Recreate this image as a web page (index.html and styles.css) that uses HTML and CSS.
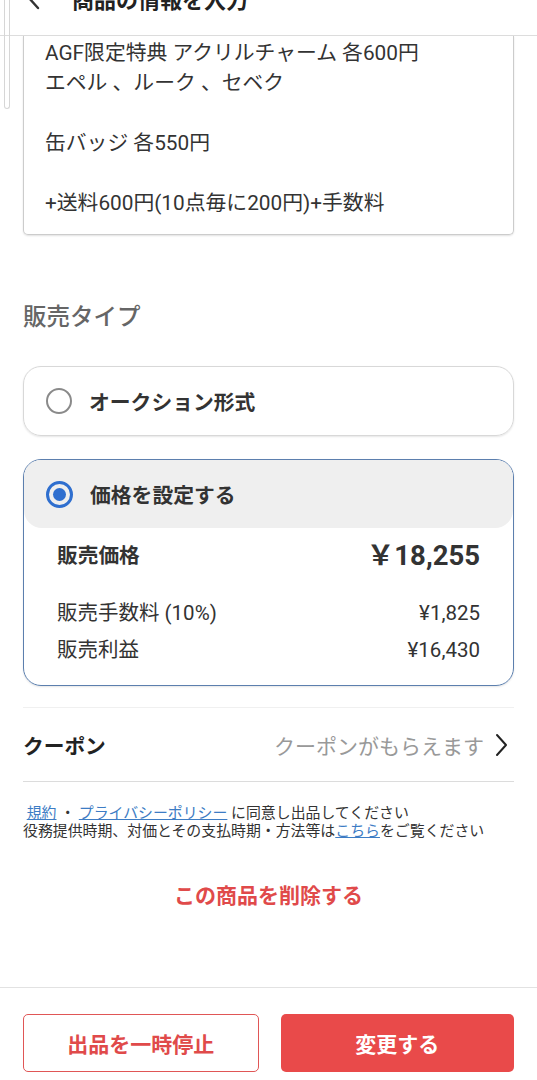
FILE: index.html
```html
<!DOCTYPE html>
<html lang="ja">

<head>
  <meta charset="UTF-8">
  <meta name="viewport" content="width=device-width, initial-scale=1.0">
  <title>商品の情報を入力</title>
  <link rel="stylesheet" href="styles.css">
</head>

<body>
  <header class="top-bar">
    <div class="top-bar-inner">
      <svg class="back-icon" width="20" height="24" viewBox="0 0 20 24">
        <path d="M14 2 L5 12 L14 22" fill="none" stroke="#333" stroke-width="2.4" stroke-linecap="round" stroke-linejoin="round" />
      </svg>
      <span class="top-title">商品の情報を入力</span>
    </div>
  </header>

  <div class="scroll-thumb"></div>

  <main class="content">
    <div class="desc">
      <p>AGF限定特典 アクリルチャーム 各600円</p>
      <p>エペル 、ルーク 、セベク</p>
      <p>&nbsp;</p>
      <p>缶バッジ 各550円</p>
      <p>&nbsp;</p>
      <p>+送料600円(10点毎に200円)+手数料</p>
    </div>

    <h2 class="section-title">販売タイプ</h2>

    <div class="option">
      <div class="option-head">
        <span class="radio"></span>
        <span class="option-label">オークション形式</span>
      </div>
    </div>

    <div class="option option-selected">
      <div class="option-head option-head-active">
        <span class="radio radio-on"></span>
        <span class="option-label">価格を設定する</span>
      </div>
      <div class="price-body">
        <div class="price-row price-main">
          <span>販売価格</span>
          <span class="price-big">￥18,255</span>
        </div>
        <div class="price-row">
          <span>販売手数料 (10%)</span>
          <span>¥1,825</span>
        </div>
        <div class="price-row">
          <span>販売利益</span>
          <span>¥16,430</span>
        </div>
      </div>
    </div>

    <div class="coupon">
      <span class="coupon-label">クーポン</span>
      <span class="coupon-note">クーポンがもらえます</span>
      <svg class="chevron" width="14" height="24" viewBox="0 0 14 24">
        <path d="M3 2 L12 12 L3 22" fill="none" stroke="#222" stroke-width="2" stroke-linecap="round" stroke-linejoin="round" />
      </svg>
    </div>

    <div class="terms">
      <p>&nbsp;<a href="#">規約</a> ・ <a href="#">プライバシーポリシー</a> に同意し出品してください</p>
      <p>役務提供時期、対価とその支払時期・方法等は<a href="#">こちら</a>をご覧ください</p>
    </div>

    <div class="delete">この商品を削除する</div>
  </main>

  <footer class="bottom-bar">
    <button class="btn btn-outline">出品を一時停止</button>
    <button class="btn btn-fill">変更する</button>
  </footer>
</body>

</html>
```

FILE: styles.css
```css
body {
  margin: 0;
  font-family: Roboto, "Noto Sans CJK JP", sans-serif;
  color: #333;
  background: #fff;
  position: relative;
}

p {
  margin: 0;
}

.top-bar {
  height: 35px;
  border-bottom: 1px solid #ddd;
  overflow: hidden;
}

.top-bar-inner {
  display: flex;
  align-items: center;
  gap: 28px;
  margin-top: -17px;
  padding-left: 24px;
  height: 30px;
}

.top-title {
  font-size: 22px;
  font-weight: 700;
  color: #222;
}

.scroll-thumb {
  position: absolute;
  top: 0;
  left: 4px;
  width: 4px;
  height: 108px;
  border: 1px solid #d6d6d6;
  border-top: none;
  border-radius: 0 0 4px 4px;
}

.content {
  padding: 0 23px;
}

.desc {
  border: 1px solid #ccc;
  border-top: none;
  border-radius: 0 0 5px 5px;
  padding: 2px 21px 16px;
  font-size: 20.8px;
  line-height: 30px;
  color: #333;
  box-shadow: 0 1px 2px rgba(0, 0, 0, 0.12);
}

.section-title {
  margin: 67px 0 34px;
  font-size: 23.5px;
  line-height: 30px;
  font-weight: 500;
  color: #666;
}

.option {
  border: 1px solid #d8d8d8;
  border-radius: 18px;
  box-shadow: 0 1px 2px rgba(0, 0, 0, 0.1);
  overflow: hidden;
}

.option + .option {
  margin-top: 23px;
}

.option-head {
  height: 68px;
  display: flex;
  align-items: center;
  padding-left: 22px;
  gap: 17px;
}

.option-head-active {
  background: #efefef;
  border-radius: 0 0 18px 18px;
}

.option-selected {
  border-color: #5c7fae;
}

.radio {
  border: 2px solid #8a8a8a;
  border-radius: 50%;
  width: 22px;
  height: 22px;
  display: flex;
  align-items: center;
  justify-content: center;
}

.radio-on {
  border: 3px solid #2f6fcf;
  width: 21px;
  height: 21px;
}

.radio-on::after {
  content: "";
  width: 13px;
  height: 13px;
  border-radius: 50%;
  background: #2f6fcf;
}

.option-label {
  font-size: 20.8px;
  font-weight: 700;
  color: #333;
}

.price-body {
  padding: 10px 33px 16px 33px;
}

.price-row {
  display: flex;
  justify-content: space-between;
  align-items: center;
  font-size: 20.5px;
  line-height: 37px;
  color: #333;
}

.price-main {
  font-size: 20.7px;
  font-weight: 700;
  line-height: 36px;
  margin-bottom: 21px;
}

.price-big {
  font-size: 27.5px;
  font-weight: 700;
  color: #333;
}

.coupon {
  margin-top: 21px;
  height: 73px;
  border-top: 1px solid #f0f0f0;
  border-bottom: 1px solid #dcdcdc;
  display: flex;
  align-items: center;
}

.coupon-label {
  font-size: 20.7px;
  font-weight: 700;
  color: #222;
  flex: 1;
}

.coupon-note {
  font-size: 21px;
  color: #999;
  margin-right: 10px;
}

.chevron {
  margin-right: 6px;
}

.terms {
  margin-top: 22px;
  font-size: 14.9px;
  line-height: 18px;
  color: #333;
}

.terms a {
  color: #3d7cc4;
  text-decoration: underline;
}

.delete {
  margin-top: 41px;
  text-align: center;
  font-size: 21px;
  font-weight: 700;
  line-height: 30px;
  color: #e04a4a;
}

.bottom-bar {
  margin-top: 76px;
  border-top: 1px solid #e2e2e2;
  padding: 26px 23px 8px;
  display: flex;
  gap: 22px;
}

.btn {
  flex: 1;
  height: 58px;
  border-radius: 5px;
  font-family: Roboto, "Noto Sans CJK JP", sans-serif;
  font-size: 21px;
  font-weight: 700;
  cursor: pointer;
}

.btn-outline {
  background: #fff;
  color: #e04a4a;
  border: 1.5px solid #e05656;
}

.btn-fill {
  background: #e94a4a;
  color: #fff;
  border: none;
}
```
